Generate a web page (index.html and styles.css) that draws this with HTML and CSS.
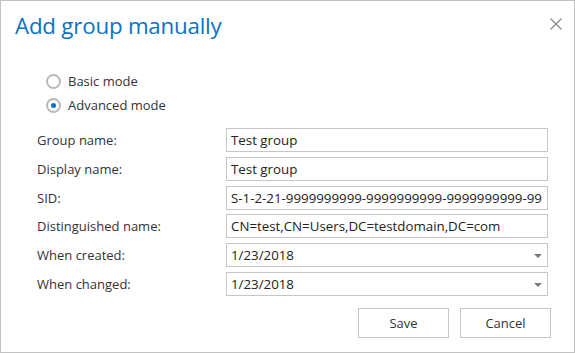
FILE: index.html
```html
<!DOCTYPE html>
<html>
<head>
<meta charset="utf-8">
<link rel="stylesheet" href="styles.css">
</head>
<body>
<div class="dialog">
  <div class="header">
    <h1 class="title">Add group manually</h1>
    <span class="close" aria-label="Close">
      <svg width="12" height="12" viewBox="0 0 12 12"><path d="M0.5 0.5 L11.5 11.5 M11.5 0.5 L0.5 11.5" stroke="#8c8c8c" stroke-width="1.3" fill="none"/></svg>
    </span>
  </div>
  <div class="modes">
    <label class="radio"><span class="circle"></span><span>Basic mode</span></label>
    <label class="radio"><span class="circle checked"></span><span>Advanced mode</span></label>
  </div>
  <div class="form">
    <div class="label">Group name:</div>
    <div class="field">Test group</div>
    <div class="label">Display name:</div>
    <div class="field">Test group</div>
    <div class="label">SID:</div>
    <div class="field">S-1-2-21-9999999999-9999999999-9999999999-99</div>
    <div class="label">Distinguished name:</div>
    <div class="field">CN=test,CN=Users,DC=testdomain,DC=com</div>
    <div class="label">When created:</div>
    <div class="field select">1/23/2018<span class="arrow"></span></div>
    <div class="label">When changed:</div>
    <div class="field select">1/23/2018<span class="arrow"></span></div>
  </div>
  <div class="footer">
    <button class="btn">Save</button>
    <button class="btn">Cancel</button>
  </div>
</div>
</body>
</html>
```
FILE: styles.css
```css
html, body {
  margin: 0;
  padding: 0;
  background: #fff;
}
.dialog {
  box-sizing: border-box;
  width: 575px;
  height: 353px;
  border: 1px solid #c2c2c2;
  font-family: "Open Sans", "Noto Sans", sans-serif;
  font-size: 13px;
  color: #333;
}
.header {
  display: flex;
  justify-content: space-between;
  align-items: flex-start;
  height: 69px;
  padding: 0 12px 0 14px;
}
.title {
  margin: 0;
  padding-top: 8px;
  font-weight: 400;
  font-size: 22.3px;
  line-height: 34px;
  color: #0a72c4;
  letter-spacing: -0.2px;
}
.close {
  display: block;
  margin-top: 17px;
  width: 12px;
  height: 12px;
}
.close svg { display: block; }
.modes {
  display: flex;
  flex-direction: column;
  padding-left: 45px;
  height: 58px;
  margin-top: -1px;
}
.radio {
  display: flex;
  align-items: center;
  height: 24px;
  gap: 7px;
}
.circle {
  box-sizing: border-box;
  width: 15px;
  height: 15px;
  border: 2px solid #b9b9b9;
  border-radius: 50%;
  display: flex;
  align-items: center;
  justify-content: center;
}
.circle.checked::after {
  content: "";
  width: 5px;
  height: 5px;
  border-radius: 50%;
  background: #0a72c4;
}
.form {
  display: grid;
  grid-template-columns: 189px 322px;
  grid-auto-rows: 24px;
  row-gap: 4.8px;
  padding-left: 36px;
  margin-top: 1px;
}
.label {
  display: flex;
  align-items: center;
}
.field {
  box-sizing: border-box;
  position: relative;
  border: 1px solid #c6c6c6;
  padding: 0 4px;
  font-size: 13.3px;
  line-height: 22px;
  white-space: nowrap;
  overflow: hidden;
  color: #222;
}
.arrow {
  position: absolute;
  right: 5px;
  top: 10px;
  width: 0;
  height: 0;
  border-left: 4px solid transparent;
  border-right: 4px solid transparent;
  border-top: 4px solid #7a7a7a;
}
.footer {
  display: flex;
  justify-content: flex-end;
  gap: 11px;
  padding-right: 23px;
  margin-top: 12.2px;
}
.btn {
  box-sizing: border-box;
  width: 91px;
  height: 30px;
  background: #fff;
  border: 1px solid #c6c6c6;
  font-family: "Open Sans", "Noto Sans", sans-serif;
  font-size: 13px;
  color: #333;
  padding: 0;
}
```
